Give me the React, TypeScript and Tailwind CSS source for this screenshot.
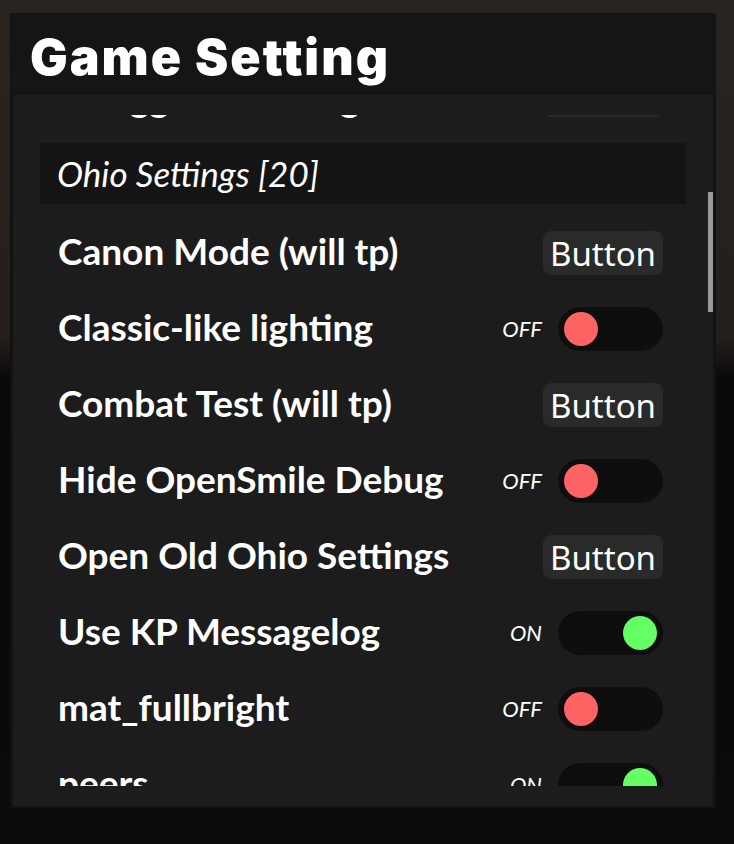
import React from "react";

type Row =
  | { label: string; kind: "button" }
  | { label: string; kind: "toggle"; on: boolean };

const rows: Row[] = [
  { label: "Canon Mode (will tp)", kind: "button" },
  { label: "Classic-like lighting", kind: "toggle", on: false },
  { label: "Combat Test (will tp)", kind: "button" },
  { label: "Hide OpenSmile Debug", kind: "toggle", on: false },
  { label: "Open Old Ohio Settings", kind: "button" },
  { label: "Use KP Messagelog", kind: "toggle", on: true },
  { label: "mat_fullbright", kind: "toggle", on: false },
  { label: "peers", kind: "toggle", on: true },
];

function ActionButton() {
  return (
    <div className="w-[120px] h-[44px] rounded-[8px] bg-[#2a2a2a] flex items-center justify-center font-['Noto_Sans',sans-serif] text-[33px] leading-none text-white">
      Button
    </div>
  );
}

function Toggle({ on }: { on: boolean }) {
  return (
    <div className="flex items-center gap-[16px]">
      <span className="font-['Lato',sans-serif] italic text-[22px] leading-none text-white">
        {on ? "ON" : "OFF"}
      </span>
      <div
        className={
          "w-[105px] h-[44px] rounded-full bg-[#0e0e0e] flex items-center px-[6px] " +
          (on ? "justify-end" : "justify-start")
        }
      >
        <div
          className={
            "w-[34px] h-[34px] rounded-full " +
            (on ? "bg-[#64ff64]" : "bg-[#ff6464]")
          }
        />
      </div>
    </div>
  );
}

function SettingRow({ row, peek }: { row: Row; peek?: boolean }) {
  return (
    <div className="h-[76px] flex items-center justify-between pl-[18px] pr-[23px]">
      <span
        className={
          (peek ? "mt-[4px] " : "mb-[5px] ") +
          "font-['Lato',sans-serif] font-bold text-[37px] leading-none text-white"
        }
      >
        {row.label}
      </span>
      {row.kind === "button" ? <ActionButton /> : <Toggle on={row.on} />}
    </div>
  );
}

export default function App() {
  return (
    <div className="min-h-screen w-full bg-[linear-gradient(to_bottom,#2a2420_0%,#241f1c_40%,#090808_45%,#0b0b0b_100%)] pt-[13px] pl-[10px] pb-[36px]">
      <div className="w-[706px] h-[795px] bg-[#121212] flex flex-col">
        {/* Title bar */}
        <div className="h-[82px] bg-[#151515] flex items-center pl-[20px] pt-[6px]">
          <h1 className="font-['Inter',sans-serif] font-black text-[50px] leading-none text-white tracking-[2px]">
            Game Setting
          </h1>
        </div>

        {/* Content */}
        <div className="relative mx-[3px] mb-[2px] flex-1 bg-[#1c1c1c] pt-[20px]">
          <div className="h-[671px] overflow-hidden">
            <div className="mt-[-58px] ml-[27px] w-[646px] flex flex-col">
              <SettingRow peek row={{ label: "Smuggler Warning", kind: "button" }} />
              <div className="mt-[10px] mb-[11px] h-[61px] bg-[#141414] flex items-center pl-[17px]">
                <span className="font-['Lato',sans-serif] italic font-normal text-[35px] leading-none text-white">
                  Ohio Settings [20]
                </span>
              </div>
              {rows.map((r) => (
                <SettingRow key={r.label} row={r} />
              ))}
            </div>
          </div>
          {/* scrollbar */}
          <div className="absolute left-[695px] top-[97px] w-[5px] h-[120px] bg-[#9a9a9a]" />
        </div>
      </div>
    </div>
  );
}
